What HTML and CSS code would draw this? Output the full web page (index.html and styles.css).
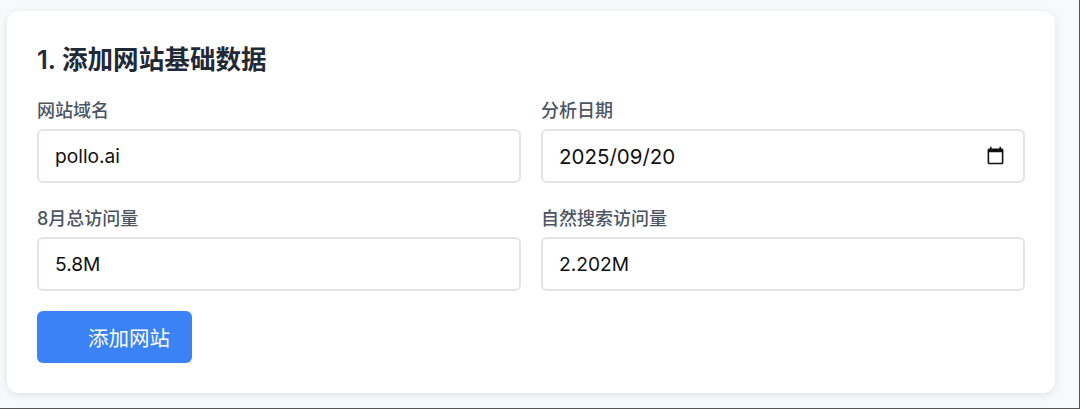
FILE: index.html
```html
<!DOCTYPE html>
<html lang="zh-CN">
<head>
    <meta charset="UTF-8">
    <meta name="viewport" content="width=device-width, initial-scale=1.0">
    <title>添加网站基础数据</title>
    <link rel="stylesheet" href="styles.css">
</head>
<body>
    <div class="page">
        <section class="card">
            <h2>1. 添加网站基础数据</h2>
            <form class="form-grid">
                <div class="form-group">
                    <label for="domain">网站域名</label>
                    <input type="text" id="domain" value="pollo.ai">
                </div>
                <div class="form-group">
                    <label for="date">分析日期</label>
                    <div class="date-field">
                        <input type="text" id="date" value="2025/09/20">
                        <svg class="date-icon" viewBox="0 0 24 24" aria-hidden="true">
                            <path d="M20 3h-1V1h-2v2H7V1H5v2H4c-1.1 0-2 .9-2 2v16c0 1.1.9 2 2 2h16c1.1 0 2-.9 2-2V5c0-1.100-.9-2-2-2zm0 18H4V8h16v13z"/>
                        </svg>
                    </div>
                </div>
                <div class="form-group">
                    <label for="total">8月总访问量</label>
                    <input type="text" id="total" value="5.8M">
                </div>
                <div class="form-group">
                    <label for="organic">自然搜索访问量</label>
                    <input type="text" id="organic" value="2.202M">
                </div>
            </form>
            <button type="button" class="add-btn">添加网站</button>
        </section>
    </div>
</body>
</html>
```

FILE: styles.css
```css
* {
    box-sizing: border-box;
}
body {
    margin: 0;
    font-family: Inter, "Noto Sans CJK SC", sans-serif;
}
.page {
    width: 1080px;
    height: 409px;
    padding: 11px 24px 0 7px;
    background-color: #f8f9fb;
    border-right: 1px solid #555;
    border-bottom: 1px solid #555;
    overflow: hidden;
}
.card {
    height: 382px;
    padding: 30px;
    background: white;
    border-radius: 12px;
    box-shadow: 0 2px 8px rgba(0, 0, 0, 0.1);
}
h2 {
    margin: 0 0 19px;
    font-size: 25.6px;
    line-height: 38px;
    font-weight: 600;
    color: #1f2937;
}
.form-grid {
    display: grid;
    grid-template-columns: 1fr 1fr;
    column-gap: 20px;
    row-gap: 23px;
}
label {
    display: block;
    margin-bottom: 5px;
    font-size: 18px;
    line-height: 26px;
    font-weight: 500;
    color: #4b5563;
}
input[type="text"] {
    display: block;
    width: 100%;
    height: 54px;
    padding: 0 16px;
    font-family: inherit;
    font-size: 19.2px;
    color: #111;
    background: white;
    border: 2px solid #e3e4e9;
    border-radius: 6px;
    outline: none;
}
.date-field {
    position: relative;
}
.date-field input[type="text"] {
    font-size: 20.5px;
}
.date-icon {
    position: absolute;
    top: 17px;
    right: 20px;
    width: 19px;
    height: 19px;
    fill: #111;
}
.add-btn {
    display: block;
    width: 155px;
    height: 52px;
    margin-top: 20px;
    padding: 0 20px 0 51px;
    font-family: inherit;
    font-size: 20.5px;
    text-align: left;
    color: white;
    background-color: #3b82f6;
    border: none;
    border-radius: 6px;
    cursor: pointer;
}
```
